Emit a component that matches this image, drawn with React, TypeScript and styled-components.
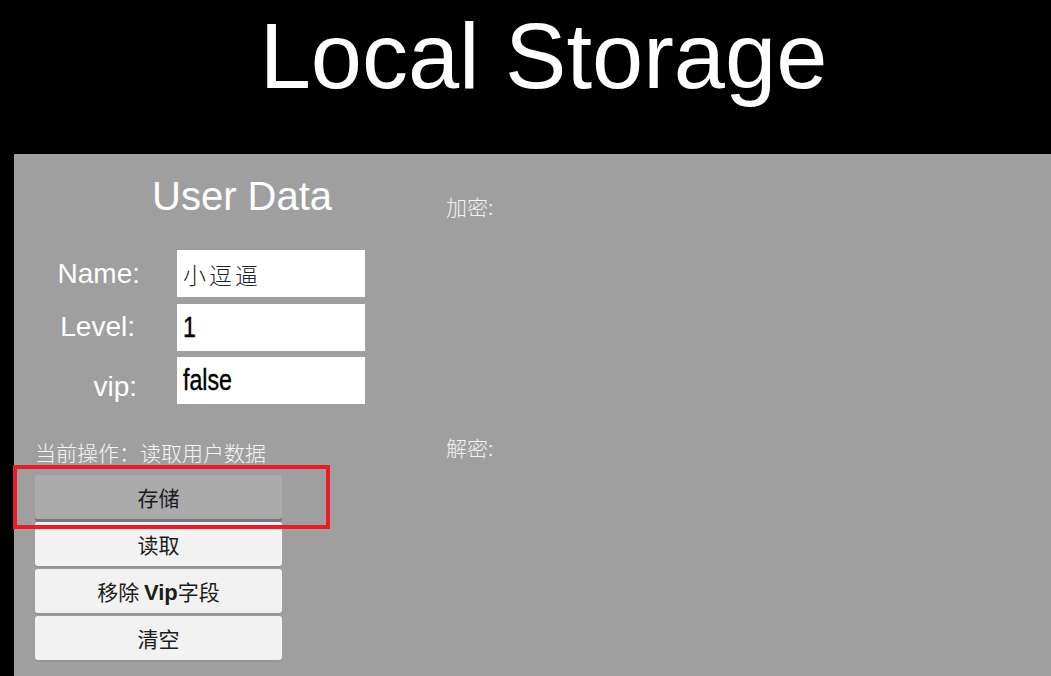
import React from "react";
import styled, { createGlobalStyle } from "styled-components";

const GlobalStyle = createGlobalStyle`
  html, body {
    margin: 0;
    padding: 0;
    background: #000;
    overflow: hidden;
  }
  body {
    font-family: "Liberation Sans", Arial, "Noto Sans CJK SC", sans-serif;
  }
`;

const Page = styled.div`
  width: 1051px;
  height: 676px;
  display: flex;
  flex-direction: column;
  background: #000;
`;

const Header = styled.header`
  height: 154px;
  box-sizing: border-box;
  padding: 10px 0 0 36px;
  display: flex;
  justify-content: center;
  flex-shrink: 0;
`;

const Title = styled.h1`
  margin: 0;
  font-family: "Liberation Sans", Arial, sans-serif;
  font-weight: 400;
  font-size: 92px;
  line-height: 92px;
  color: #fff;
`;

const Panel = styled.main`
  flex: 1;
  margin-left: 14px;
  background: #9f9f9f;
  display: flex;
`;

const LeftColumn = styled.section`
  width: 432px;
  box-sizing: border-box;
  padding: 20px 0 0 21px;
  display: flex;
  flex-direction: column;
`;

const Heading = styled.h2`
  margin: 0 0 0 117px;
  font-family: "Liberation Sans", Arial, sans-serif;
  font-weight: 400;
  font-size: 40px;
  line-height: 45px;
  color: #fff;
`;

const Form = styled.div`
  margin-top: 31px;
  display: grid;
  grid-template-columns: 103px 188px;
  column-gap: 39px;
  row-gap: 6.5px;
`;

const Label = styled.label<{ $down?: number; $right?: number }>`
  align-self: center;
  text-align: right;
  font-family: "Liberation Sans", Arial, sans-serif;
  font-size: 28px;
  line-height: 32px;
  color: #fff;
  transform: translate(${(p) => p.$right ?? 0}px, ${(p) => p.$down ?? 0}px);
`;

const FieldBox = styled.div`
  width: 188px;
  height: 47px;
  box-sizing: border-box;
  padding: 0 0 0 6px;
  background: #fff;
  display: flex;
  align-items: center;
  overflow: hidden;
`;

const FieldText = styled.span<{ $cjk?: boolean }>`
  display: inline-block;
  white-space: nowrap;
  color: ${(p) => (p.$cjk ? "#222" : "#000")};
  font-family: ${(p) =>
    p.$cjk ? '"Noto Sans CJK SC", sans-serif' : '"Liberation Sans", Arial, sans-serif'};
  font-size: ${(p) => (p.$cjk ? "23px" : "29px")};
  font-weight: ${(p) => (p.$cjk ? 300 : 400)};
  letter-spacing: ${(p) => (p.$cjk ? "3px" : "0")};
  -webkit-text-stroke: ${(p) => (p.$cjk ? "0" : "0.4px #000")};
  transform: ${(p) => (p.$cjk ? "none" : "scaleX(0.8)")};
  transform-origin: left center;
`;

const Status = styled.p`
  margin: 36px 0 0;
  font-family: "Noto Sans CJK SC", sans-serif;
  font-weight: 300;
  font-size: 21px;
  line-height: 24px;
  color: #f5f5f5;
`;

const ButtonStack = styled.div`
  position: relative;
  margin-top: 11px;
  width: 247px;
  display: flex;
  flex-direction: column;
  gap: 3px;
`;

const ActionButton = styled.button<{ $pressed?: boolean }>`
  height: 44px;
  margin: 0;
  padding: 0;
  border: none;
  border-radius: 3px;
  background: ${(p) => (p.$pressed ? "#ababab" : "#f2f2f2")};
  box-shadow: ${(p) =>
    p.$pressed ? "0 3px 0 #777" : "0 2px 0 rgba(0, 0, 0, 0.06)"};
  color: #1c1c1c;
  font-family: "Noto Sans CJK SC", sans-serif;
  font-weight: 400;
  font-size: 21px;
  line-height: 44px;
  text-align: center;
  cursor: pointer;
`;

const Latin = styled.b`
  font-family: "Liberation Sans", Arial, sans-serif;
  font-weight: 700;
  font-size: 22px;
`;

const Highlight = styled.div`
  position: absolute;
  left: -22px;
  top: -10px;
  width: 317px;
  height: 64px;
  box-sizing: border-box;
  border: 4px solid #ec1c24;
  pointer-events: none;
`;

const RightColumn = styled.section`
  flex: 1;
  padding: 40px 0 0;
  display: flex;
  flex-direction: column;
`;

const SideLabel = styled.p<{ $gap?: number }>`
  margin: ${(p) => p.$gap ?? 0}px 0 0;
  font-family: "Noto Sans CJK SC", sans-serif;
  font-weight: 300;
  font-size: 21px;
  line-height: 24px;
  color: #f2f2f2;
`;

export default function App() {
  return (
    <Page>
      <GlobalStyle />
      <Header>
        <Title>Local Storage</Title>
      </Header>
      <Panel>
        <LeftColumn>
          <Heading>User Data</Heading>
          <Form>
            <Label $right={2}>Name:</Label>
            <FieldBox>
              <FieldText $cjk>小逗逼</FieldText>
            </FieldBox>
            <Label $right={-3}>Level:</Label>
            <FieldBox>
              <FieldText>1</FieldText>
            </FieldBox>
            <Label $down={6} $right={-1}>vip:</Label>
            <FieldBox>
              <FieldText>false</FieldText>
            </FieldBox>
          </Form>
          <Status>当前操作：读取用户数据</Status>
          <ButtonStack>
            <ActionButton $pressed>存储</ActionButton>
            <ActionButton>读取</ActionButton>
            <ActionButton>
              移除 <Latin>Vip</Latin>字段
            </ActionButton>
            <ActionButton>清空</ActionButton>
            <Highlight />
          </ButtonStack>
        </LeftColumn>
        <RightColumn>
          <SideLabel>加密:</SideLabel>
          <SideLabel $gap={217}>解密:</SideLabel>
        </RightColumn>
      </Panel>
    </Page>
  );
}
